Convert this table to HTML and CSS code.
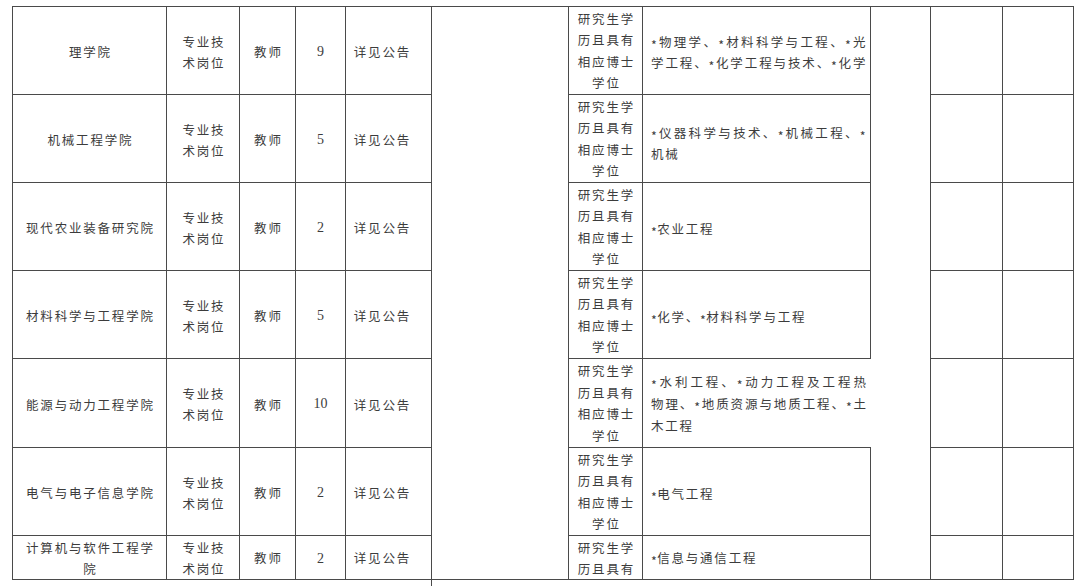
FILE: index.html
```html
<!DOCTYPE html>
<html lang="zh-CN">
<head>
<meta charset="utf-8">
<title>岗位表</title>
<link rel="stylesheet" href="styles.css">
</head>
<body>
<div class="page">
<table class="grid">
<colgroup>
<col class="c1"><col class="c2"><col class="c3"><col class="c4"><col class="c5"><col class="c6"><col class="c7"><col class="c8"><col class="c9"><col class="c10"><col class="c11">
</colgroup>
<tbody>
<tr class="r">
<td class="ctr">理学院</td>
<td class="ctr">专业技<br>术岗位</td>
<td class="ctr">教师</td>
<td class="num">9</td>
<td class="ctr see">详见公告</td>
<td class="blank" rowspan="7"></td>
<td class="deg">研究生学<br>历且具有<br>相应博士<br>学位</td>
<td class="major"><span class="jl"><span class="ast">*</span>物理学、<span class="ast">*</span>材料科学与工程、<span class="ast">*</span>光</span><span class="jl">学工程、<span class="ast">*</span>化学工程与技术、<span class="ast">*</span>化学</span></td>
<td class="blank" rowspan="7"></td>
<td></td>
<td></td>
</tr>
<tr class="r">
<td class="ctr">机械工程学院</td>
<td class="ctr">专业技<br>术岗位</td>
<td class="ctr">教师</td>
<td class="num">5</td>
<td class="ctr see">详见公告</td>
<td class="deg">研究生学<br>历且具有<br>相应博士<br>学位</td>
<td class="major m2"><span class="jl"><span class="ast">*</span>仪器科学与技术、<span class="ast">*</span>机械工程、<span class="ast">*</span></span>机械</td>
<td></td>
<td></td>
</tr>
<tr class="r">
<td class="ctr">现代农业装备研究院</td>
<td class="ctr">专业技<br>术岗位</td>
<td class="ctr">教师</td>
<td class="num">2</td>
<td class="ctr see">详见公告</td>
<td class="deg">研究生学<br>历且具有<br>相应博士<br>学位</td>
<td class="major"><span class="ast">*</span>农业工程</td>
<td></td>
<td></td>
</tr>
<tr class="r">
<td class="ctr">材料科学与工程学院</td>
<td class="ctr">专业技<br>术岗位</td>
<td class="ctr">教师</td>
<td class="num">5</td>
<td class="ctr see">详见公告</td>
<td class="deg">研究生学<br>历且具有<br>相应博士<br>学位</td>
<td class="major"><span class="ast">*</span>化学、<span class="ast">*</span>材料科学与工程</td>
<td></td>
<td></td>
</tr>
<tr class="r r5">
<td class="ctr">能源与动力工程学院</td>
<td class="ctr">专业技<br>术岗位</td>
<td class="ctr">教师</td>
<td class="num">10</td>
<td class="ctr see">详见公告</td>
<td class="deg">研究生学<br>历且具有<br>相应博士<br>学位</td>
<td class="major open"><span class="jl"><span class="ast">*</span>水利工程、<span class="ast">*</span>动力工程及工程热</span><span class="jl">物理、<span class="ast">*</span>地质资源与地质工程、<span class="ast">*</span>土</span>木工程</td>
<td></td>
<td></td>
</tr>
<tr class="r">
<td class="ctr">电气与电子信息学院</td>
<td class="ctr">专业技<br>术岗位</td>
<td class="ctr">教师</td>
<td class="num">2</td>
<td class="ctr see">详见公告</td>
<td class="deg">研究生学<br>历且具有<br>相应博士<br>学位</td>
<td class="major"><span class="ast">*</span>电气工程</td>
<td></td>
<td></td>
</tr>
<tr class="last">
<td class="ctr">计算机与软件工程学<br>院</td>
<td class="ctr">专业技<br>术岗位</td>
<td class="ctr">教师</td>
<td class="num">2</td>
<td class="ctr see">详见公告</td>
<td class="deg top"><div class="clip">研究生学<br>历且具有</div></td>
<td class="major"><span class="ast">*</span>信息与通信工程</td>
<td></td>
<td></td>
</tr>
</tbody>
</table>
<div class="tail"></div>
</div>
</body>
</html>
```
FILE: styles.css
```css
html, body {
  margin: 0;
  padding: 0;
  background: #ffffff;
  overflow: hidden;
}
.page {
  padding: 6px 0 0 12px;
  width: 1080px;
  height: 586px;
  box-sizing: border-box;
  overflow: hidden;
}
.grid {
  border-collapse: collapse;
  table-layout: fixed;
  width: 1062px;
  font-family: "Noto Sans CJK SC", "Liberation Serif", serif;
  font-size: 12.5px;
  color: #3c3c3c;
  letter-spacing: 1.8px;
}
.c1 { width: 154px; }
.c2 { width: 73px; }
.c3 { width: 56px; }
.c4 { width: 50px; }
.c5 { width: 86px; }
.c6 { width: 137px; }
.c7 { width: 74px; }
.c8 { width: 228px; }
.c9 { width: 60px; }
.c10 { width: 72px; }
.c11 { width: 71px; }
.grid td {
  border: 1px solid #4a4a4a;
  padding: 0;
  vertical-align: middle;
  overflow: hidden;
}
.grid tr + tr td {
  border-top-color: #6e6e6e;
}
.r { height: 88px; }
.r5 { height: 89px; }
.last { height: 43px; }
.ctr {
  text-align: center;
  line-height: 21px;
  padding: 2px 0 0 1.8px !important;
}
.see {
  padding-right: 14px !important;
}
.last .ctr {
  line-height: 21px;
  padding-top: 0 !important;
}
.num {
  text-align: center;
  font-family: "Liberation Serif", serif;
  font-size: 14px;
  letter-spacing: 0;
  padding-top: 2px !important;
}
.deg {
  text-align: center;
  line-height: 21.5px;
  padding: 0 0 0 1.8px !important;
  border-left-color: #888 !important;
}
.deg.top {
  vertical-align: top;
}
.clip {
  height: 42px;
  padding-top: 1px;
  line-height: 21px;
  overflow: hidden;
}
.major {
  text-align: left;
  line-height: 21px;
  padding: 3px 4px 0 8px !important;
}
.m2 {
  padding-top: 8px !important;
}
.r5 .major {
  line-height: 22px;
  padding-top: 2px !important;
}
.last .major {
  padding-top: 0 !important;
}
.major.open {
  border-right-style: hidden !important;
}
.jl {
  display: block;
  text-align: justify;
  text-align-last: justify;
  letter-spacing: 0.6px;
}
.ast {
  position: relative;
  top: 3px;
  letter-spacing: 0.3px;
}
.tail {
  width: 1px;
  height: 10px;
  margin-left: 419px;
  background: #4a4a4a;
}
```
